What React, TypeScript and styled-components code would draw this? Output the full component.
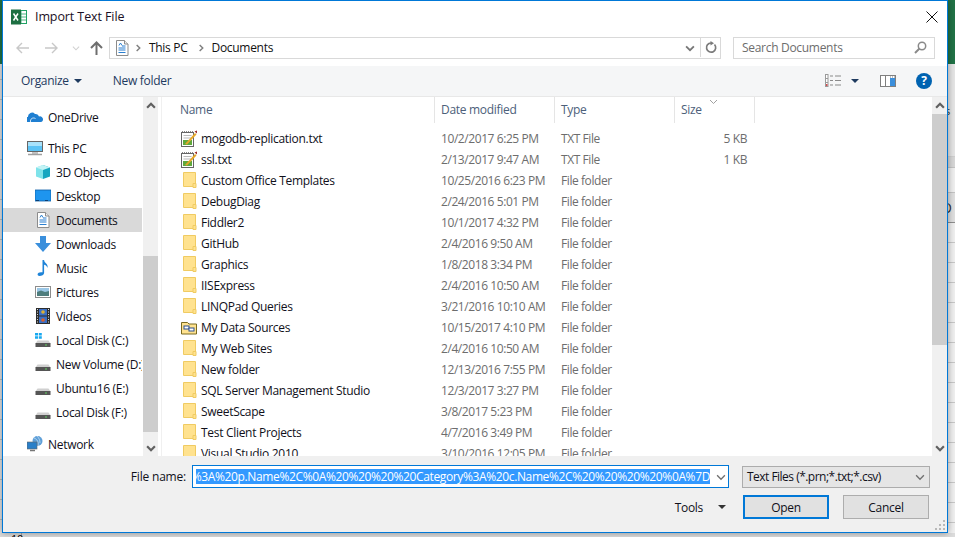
import React from "react";
import styled, { createGlobalStyle } from "styled-components";

const Global = createGlobalStyle`
  html, body { margin: 0; padding: 0; background: #e8e8e8; }
  * { box-sizing: border-box; }
`;

const FONT = `"Open Sans", "Noto Sans", "Liberation Sans", sans-serif`;

const Screen = styled.div`
  width: 955px; height: 537px; overflow: hidden; display: flex; flex-direction: column;
  font-family: ${FONT}; font-size: 12px; letter-spacing: -0.3px; color: #000;
`;
const TopRow = styled.div`display: flex; height: 533px;`;
const LeftSliver = styled.div`
  width: 2px; flex: none;
  background: linear-gradient(#217346 0 64px, transparent 64px), repeating-linear-gradient(#e2e2e2 0 19px, #bcbcbc 19px 20px);
`;
const Dialog = styled.div`
  width: 946px; flex: none; height: 533px; display: flex; flex-direction: column;
  border: 1px solid #0078d7; background: #fff; box-shadow: 0 0 7px rgba(0,0,0,.38); position: relative; z-index: 1;
`;
const RightStrip = styled.div`flex: 1; display: flex; flex-direction: column; background: #f0f0f0;`;
const Band = styled.div<{ $h: number; $bg: string; $line?: string }>`
  height: ${p => p.$h}px; flex: none; background: ${p => p.$bg}; border-bottom: 1px solid ${p => p.$line ?? "transparent"};
  overflow: hidden; display: flex; align-items: center; font-size: 11px; line-height: 1; color: #333;
`;
const ClippedGlyph = styled.span<{ $shift: number }>`margin-left: ${p => p.$shift}px; font-size: ${p => p.$shift < -6 ? 14 : 11}px; white-space: nowrap;`;
const BottomStrip = styled.div`
  height: 4px; flex: none; overflow: hidden; padding-left: 11px; font-size: 11px; line-height: 11px;
  background: linear-gradient(90deg, transparent 21px, #a8a8a8 21px 22px, transparent 22px), repeating-linear-gradient(90deg, #dcdcdc 0 84px, #a8a8a8 84px 85px, #dcdcdc 85px);
  background-size: 100% 100%, 64px 100%;
  background-position: 0 0, 21px 0;
`;

const TitleBar = styled.div`height: 31px; flex: none; display: flex; align-items: center; padding: 0 9px 0 8px; color: #000; font-size: 12.5px;`;
const TitleText = styled.span`margin-left: 8px; flex: 1; letter-spacing: -0.1px; color: #1a1026;`;

const Nav = styled.div`height: 34px; flex: none; display: flex; align-items: flex-start; padding: 5px 11px 0 0;`;
const NavButtons = styled.div`width: 106px; height: 22px; flex: none; display: flex; align-items: center; position: relative;`;
const NavSlot = styled.span<{ $w: number; $ml?: number }>`width: ${p => p.$w}px; margin-left: ${p => p.$ml ?? 0}px; display: flex; justify-content: center;`;
const Breadcrumb = styled.div`
  width: 612px; height: 22px; flex: none; display: flex; align-items: center; border: 1px solid #d9d9d9; background: #fff;
  padding: 0 0 1px 4px; color: #111;
`;
const CrumbSep = styled.span<{ $l: number; $r: number }>`margin: 0 ${p => p.$r}px 0 ${p => p.$l}px; display: flex;`;
const CrumbEnd = styled.div`margin-left: auto; height: 100%; display: flex;`;
const CrumbBtn = styled.span<{ $w: number; $line?: boolean }>`
  width: ${p => p.$w}px; display: flex; align-items: center; justify-content: center;
  border-left: ${p => p.$line ? "1px solid #d9d9d9" : "none"};
`;
const SearchBox = styled.div`
  width: 202px; height: 22px; margin-left: 12px; flex: none; display: flex; align-items: center; justify-content: space-between;
  border: 1px solid #d9d9d9; padding: 0 7px 1px 8px; color: #6d6d6d;
`;

const Toolbar = styled.div`
  height: 31px; flex: none; display: flex; align-items: center; background: #f5f6f7; border-bottom: 1px solid #e8e8e8;
  padding: 0 15px 1px 18px; color: #1e3a5f;
`;
const ToolLabel = styled.span<{ $ml?: number }>`margin-left: ${p => p.$ml ?? 0}px;`;
const ToolGroup = styled.div`margin-left: auto; display: flex; align-items: center;`;
const Caret = styled.span<{ $ml: number; $color?: string }>`
  margin-left: ${p => p.$ml}px; width: 0; height: 0; flex: none;
  border-left: 4px solid transparent; border-right: 4px solid transparent; border-top: 4px solid ${p => p.$color ?? "#1e3a5f"};
`;
const ToolGap = styled.span`width: 21px; flex: none;`;
const HelpBadge = styled.span`
  width: 16px; height: 16px; margin-left: 20px; border-radius: 50%; background: #0063b1; color: #fff; font-weight: 700; font-size: 12px;
  line-height: 16px; text-align: center; letter-spacing: 0;
`;

const Main = styled.div`height: 359px; flex: none; display: flex; background: #fff;`;
const Sidebar = styled.div`width: 140px; flex: none; overflow: hidden; padding-top: 8px;`;
const NavRow = styled.div<{ $sel?: boolean; $lvl: number; $gap?: number }>`
  height: 24px; width: 139px; display: flex; align-items: center; white-space: nowrap; overflow: hidden;
  margin-top: ${p => p.$gap ?? 0}px;
  padding-left: ${p => p.$lvl ? 32 : 24}px; background: ${p => p.$sel ? "#d9d9d9" : "transparent"}; color: #10101a;
`;
const NavIcon = styled.span`width: 16px; height: 16px; flex: none; margin-right: 5px; display: flex;`;
const ScrollBar = styled.div`width: 15px; flex: none; background: #f0f0f0; display: flex; flex-direction: column;`;
const ScrollBtn = styled.div`height: 17px; flex: none; display: flex; align-items: center; justify-content: center;`;
const Thumb = styled.div<{ $top: number; $h: number }>`
  margin-top: ${p => p.$top}px; height: ${p => p.$h}px; flex: none; background: #cdcdcd;
`;
const ScrollRest = styled.div`flex: 1;`;
const Splitter = styled.div`width: 4px; flex: none; border-right: 1px solid #f0f0f0;`;

const Files = styled.div`flex: 1; min-width: 0; overflow: hidden;`;
const Columns = "273px 120px 120px 80px";
const HeaderRow = styled.div`display: grid; grid-template-columns: ${Columns}; height: 25px; margin-bottom: 6px;`;
const HeadCell = styled.div<{ $pl: number }>`
  padding-left: ${p => p.$pl}px; border-right: 1px solid #e5e5e5; color: #4c607a; line-height: 26px; position: relative;
`;
const SortMark = styled.span`position: absolute; left: 34px; top: 0; display: flex;`;
const FileRow = styled.div`display: grid; grid-template-columns: ${Columns}; height: 21px; align-items: center; white-space: nowrap; color: #6d6d6d;`;
const NameCell = styled.div`display: flex; align-items: center; padding-left: 19px; color: #10101a;`;
const FileIcon = styled.span`width: 16px; height: 17px; flex: none; margin-right: 4px; display: flex;`;
const Cell = styled.div<{ $right?: boolean }>`
  padding: ${p => p.$right ? "0 8px 0 0" : "0 0 0 6px"}; text-align: ${p => p.$right ? "right" : "left"}; letter-spacing: -0.42px;
`;

const Footer = styled.div`flex: 1; background: #f0f0f0; padding-top: 9px; position: relative;`;
const FooterRow = styled.div`display: flex; align-items: center; height: 23px;`;
const FileLabel = styled.label`width: 183px; text-align: right; margin-right: 6px; flex: none; color: #10101a; letter-spacing: -0.2px;`;
const NameInput = styled.div`
  width: 537px; height: 23px; flex: none; display: flex; align-items: center; border: 1px solid #0078d7; background: #fff; padding-left: 3px;
`;
const SelectionClip = styled.div`width: 514px; flex: none; overflow: hidden; display: flex; justify-content: flex-end; background: #3399ff;`;
const SelectedText = styled.span`flex: none; color: #fff; line-height: 15px; white-space: nowrap; letter-spacing: -0.37px;`;
const InputChevron = styled.span`margin-left: 4px; width: 14px; display: flex; justify-content: center;`;
const FilterSelect = styled.div`
  width: 188px; height: 22px; margin-left: 13px; flex: none; display: flex; align-items: center; justify-content: space-between;
  border: 1px solid #acacac; background: #e5e5e5; padding: 0 4px 0 4px; color: #10101a; white-space: nowrap; letter-spacing: -0.52px;
`;
const ActionRow = styled.div`display: flex; align-items: center; justify-content: flex-end; height: 24px; margin-top: 7px; padding-right: 18px;`;
const ToolsLabel = styled.span`color: #10101a;`;
const ActionButton = styled.div<{ $primary?: boolean }>`
  width: 86px; height: 24px; flex: none; display: flex; align-items: center; justify-content: center; color: #10101a;
  background: #e1e1e1; border: ${p => p.$primary ? "2px solid #0078d7" : "1px solid #adadad"}; margin-left: ${p => p.$primary ? 17 : 14}px;
`;
const Grip = styled.span`position: absolute; right: 1px; bottom: 1px; display: flex;`;

const Chevron = ({ dir = "down", c = "#606060", size = 9, w = 1.6 }: { dir?: "down" | "up" | "right"; c?: string; size?: number; w?: number }) => {
  const d = dir === "down" ? "M1 3l3.5 3.5L8 3" : dir === "up" ? "M1 6l3.5-3.5L8 6" : "M3 1l3.5 3.5L3 8";
  return <svg width={size} height={size} viewBox="0 0 9 9"><path d={d} fill="none" stroke={c} strokeWidth={w} /></svg>;
};
const ArrowLeft = ({ c }: { c: string }) => (
  <svg width="13" height="12" viewBox="0 0 13 12"><path d="M1 6h12M6 1L1 6l5 5" fill="none" stroke={c} strokeWidth="1.4" /></svg>
);
const ArrowRight = ({ c }: { c: string }) => (
  <svg width="13" height="12" viewBox="0 0 13 12"><path d="M12 6H0M7 1l5 5-5 5" fill="none" stroke={c} strokeWidth="1.4" /></svg>
);
const ArrowUp = () => (
  <svg width="13" height="14" viewBox="0 0 13 14"><path d="M6.5 14V2M1 7l5.5-5.5L12 7" fill="none" stroke="#6e6e6e" strokeWidth="2" /></svg>
);
const ExcelIcon = () => (
  <svg width="16" height="16" viewBox="0 0 16 16">
    <rect x="5" y="1.5" width="10.5" height="13" fill="#fff" stroke="#21a366" />
    <path d="M10 1.5v13M5 5h10.500M5 8h10.500M5 11h10.500" stroke="#21a366" strokeWidth=".8" />
    <rect x="0" y="0.500" width="10" height="15" fill="#1d6f42" />
    <path d="M2.500 4.500l4.500 7M7 4.500l-4.500 7" stroke="#fff" strokeWidth="1.500" />
  </svg>
);
const DocIcon = () => (
  <svg width="16" height="16" viewBox="0 0 16 16">
    <path d="M2.500.5h8l3.500 3.500v11.500h-11.500z" fill="#fff" stroke="#8c8c8c" />
    <path d="M10.500.5v3.500h3.500" fill="#eee" stroke="#8c8c8c" />
    <path d="M5 5.500l1.500-2.500 1.500 2.500M4.500 8h7M8 6h3.500M4.500 10h7M4.500 12.500h7" stroke="#2a7fd0" strokeWidth="1" fill="none" />
  </svg>
);
const RefreshIcon = () => (
  <svg width="12" height="13" viewBox="0 0 12 13"><path d="M9.500 3.500a4.600 4.600 0 1 1-3.500-1.500" fill="none" stroke="#7a7a7a" strokeWidth="1.700" /><path d="M5.500 0v4.500L9 2.200z" fill="#7a7a7a" /></svg>
);
const SearchIcon = () => (
  <svg width="13" height="13" viewBox="0 0 13 13"><circle cx="8" cy="5" r="3.700" fill="none" stroke="#8a8a8a" strokeWidth="1.500" /><path d="M5.500 7.500L1 12" stroke="#8a8a8a" strokeWidth="2" /></svg>
);
const ViewIcon = () => (
  <svg width="17" height="13" viewBox="0 0 17 13">
    <rect x=".5" y=".5" width="2.500" height="12" fill="#fff" stroke="#9a9a9a" />
    <path d="M.5 4.500h2.500M.5 8.500h2.500" stroke="#9a9a9a" />
    <rect x="1" y="10" width="1.500" height="2" fill="#d05050" />
    <path d="M5 2h3M10 2h6M5 6.500h3M10 6.500h6M5 11h3M10 11h6" stroke="#8a8a8a" strokeWidth="1.200" />
  </svg>
);
const PaneIcon = () => (
  <svg width="16" height="12" viewBox="0 0 16 12">
    <rect x=".5" y=".5" width="15" height="11" fill="#fff" stroke="#7f7f7f" />
    <rect x="5" y="1" width="1" height="10" fill="#7f7f7f" />
    <rect x="10" y="3" width="5" height="8" fill="#3b8fdc" />
    <path d="M10 2h1M12 2h1M14 2h1" stroke="#7f7f7f" />
  </svg>
);
const OneDriveIcon = () => (
  <svg width="16" height="16" viewBox="0 0 16 16"><path d="M0 13a2.500 2.500 0 0 1 1-5 4 4 0 0 1 7-3 3.500 3.500 0 0 1 4 2.500 3 3 0 0 1 4 3c0 1.500-1 2.500-2 2.500z" fill="#1f7fd1" /><path d="M3.500 13c-.5-3 2-5 5-3.500" stroke="#fff" fill="none" strokeWidth=".8" /></svg>
);
const PCIcon = () => (
  <svg width="16" height="16" viewBox="0 0 16 16"><rect x=".5" y="1.500" width="15" height="10" fill="#5cc3f5" stroke="#666" /><rect x="1" y="2" width="14" height="4" fill="#a8e2fb" /><path d="M5 12.500h6v1H5z" fill="#888" /><path d="M1 14.500h14" stroke="#a0a0a0" strokeWidth="1.500" /></svg>
);
const CubeIcon = () => (
  <svg width="16" height="16" viewBox="0 0 16 16"><path d="M8 1l7 2.500v9L8 15z" fill="#16a6c0" /><path d="M8 1L1 3.500v9L8 15z" fill="#7fe3ea" /><path d="M1 3.500L8 6l7-2.500L8 1z" fill="#c3f3f5" /></svg>
);
const DesktopIcon = () => (
  <svg width="16" height="16" viewBox="0 0 16 16"><rect x="0" y="2" width="16" height="11" fill="#1e95ef" stroke="#0d5fa8" strokeWidth=".8" /><path d="M1 12.500h14" stroke="#0a3f74" strokeWidth="1" strokeDasharray="3 6" /></svg>
);
const DownloadIcon = () => (
  <svg width="16" height="16" viewBox="0 0 16 16"><path d="M5 0h6v7h5l-8 9-8-9h5z" fill="#3a8fdc" /></svg>
);
const MusicIcon = () => (
  <svg width="16" height="16" viewBox="0 0 16 16"><path d="M7.500 0h1.600c0 3 4.400 3.500 3.400 8-.5-2-2-3-3.400-3.200V13c0 2-2.500 3-4.600 3-2.500 0-2.500-3 0-3.500 1-.2 2-.2 3-.2z" fill="#1f84d8" /></svg>
);
const PicturesIcon = () => (
  <svg width="16" height="16" viewBox="0 0 16 16"><rect x=".5" y="2.500" width="15" height="11" fill="#fff" stroke="#8c8c8c" /><rect x="2" y="4" width="12" height="4" fill="#9bc7e6" /><path d="M2 8l4-1.500L10 8l4-1v5H2z" fill="#4e7d7d" /></svg>
);
const VideosIcon = () => (
  <svg width="16" height="16" viewBox="0 0 16 16"><rect x="1" y="0" width="14" height="16" fill="#2c2c2c" /><rect x="4" y="1" width="8" height="6.500" fill="#3b6fc4" /><rect x="4" y="8.500" width="8" height="6.500" fill="#3b6fc4" /><circle cx="8" cy="4" r="1.800" fill="#e0b030" /><circle cx="8" cy="12" r="1.800" fill="#d8602a" /><path d="M2.500 1v14M13.500 1v14" stroke="#ddd" strokeWidth="1" strokeDasharray="1 1.500" /></svg>
);
const DiskIcon = ({ win }: { win?: boolean }) => (
  <svg width="16" height="16" viewBox="0 0 16 16">
    <path d="M2.500 8.500h11l2 3H.5z" fill="#d0d0d0" />
    <rect x=".5" y="11" width="15" height="4" fill="#555" />
    <rect x="10" y="12.500" width="2" height="1" fill="#60d060" />
    {win && <path d="M0 1h3v2.500H0zM3.800 1h3v2.500h-3zM0 4.300h3v2.500H0zM3.800 4.300h3v2.500h-3z" fill="#19a9f0" />}
  </svg>
);
const NetworkIcon = () => (
  <svg width="16" height="16" viewBox="0 0 16 16"><circle cx="10.500" cy="5" r="5" fill="#5e9fd8" /><path d="M7 2c3 1 5 4 4 8M10 0c2 2 3 4 3 7" stroke="#cde4f5" fill="none" strokeWidth=".7" /><rect x="0" y="6" width="10" height="7" fill="#2a7fc8" stroke="#666" strokeWidth=".6" /><path d="M3 14.500h5" stroke="#777" strokeWidth="1.500" /></svg>
);
const TxtIcon = () => (
  <svg width="16" height="17" viewBox="0 0 16 17">
    <rect x=".5" y="2.500" width="12" height="14" fill="#fff" stroke="#666" />
    <path d="M1 1.800h11" stroke="#666" strokeWidth="1.200" strokeDasharray="1 1" />
    <path d="M2.500 5.500h8M2.500 8h8" stroke="#bbb" />
    <rect x="2" y="10" width="9" height="5" fill="#5fa83c" />
    <path d="M4 14L14 3l1.500 1.500L6 14.500z" fill="#e7a82a" />
    <path d="M13.500 1.500l2.500-1v3z" fill="#9c2b2b" />
  </svg>
);
const FolderIcon = () => (
  <svg width="16" height="17" viewBox="0 0 16 17">
    <path d="M2.500.5h12v14h-12z" fill="#ffe28f" stroke="#f0cb62" />
    <path d="M12 15.500v-4h3v4z" fill="#ffe28f" stroke="#f0cb62" />
  </svg>
);
const DataFolderIcon = () => (
  <svg width="16" height="17" viewBox="0 0 16 17">
    <path d="M.5 3.500h6l1.500 1.500h7.500v10H.5z" fill="#ffe28f" stroke="#7a6a20" />
    <rect x="3" y="7" width="5" height="3" fill="#fff" stroke="#2a4f90" />
    <rect x="8" y="9" width="5" height="3" fill="#fff" stroke="#2a4f90" />
  </svg>
);
const GripIcon = () => (
  <svg width="11" height="11" viewBox="0 0 11 11"><path d="M8 0h2v2H8zM4 4h2v2H4zM8 4h2v2H8zM0 8h2v2H0zM4 8h2v2H4zM8 8h2v2H8z" fill="#b8b8b8" /></svg>
);

const navTop = [
  { label: "3D Objects", icon: <CubeIcon /> },
  { label: "Desktop", icon: <DesktopIcon /> },
  { label: "Documents", icon: <DocIcon />, sel: true },
  { label: "Downloads", icon: <DownloadIcon /> },
  { label: "Music", icon: <MusicIcon /> },
  { label: "Pictures", icon: <PicturesIcon /> },
  { label: "Videos", icon: <VideosIcon /> },
  { label: "Local Disk (C:)", icon: <DiskIcon win /> },
  { label: "New Volume (D:)", icon: <DiskIcon /> },
  { label: "Ubuntu16 (E:)", icon: <DiskIcon /> },
  { label: "Local Disk (F:)", icon: <DiskIcon /> },
];

type F = { name: string; date: string; kind?: "txt" | "data"; size?: string };
const files: F[] = [
  { name: "mogodb-replication.txt", date: "10/2/2017 6:25 PM", kind: "txt", size: "5 KB" },
  { name: "ssl.txt", date: "2/13/2017 9:47 AM", kind: "txt", size: "1 KB" },
  { name: "Custom Office Templates", date: "10/25/2016 6:23 PM" },
  { name: "DebugDiag", date: "2/24/2016 5:01 PM" },
  { name: "Fiddler2", date: "10/1/2017 4:32 PM" },
  { name: "GitHub", date: "2/4/2016 9:50 AM" },
  { name: "Graphics", date: "1/8/2018 3:34 PM" },
  { name: "IISExpress", date: "2/4/2016 10:50 AM" },
  { name: "LINQPad Queries", date: "3/21/2016 10:10 AM" },
  { name: "My Data Sources", date: "10/15/2017 4:10 PM", kind: "data" },
  { name: "My Web Sites", date: "2/4/2016 10:50 AM" },
  { name: "New folder", date: "12/13/2016 7:55 PM" },
  { name: "SQL Server Management Studio", date: "12/3/2017 3:27 PM" },
  { name: "SweetScape", date: "3/8/2017 5:23 PM" },
  { name: "Test Client Projects", date: "4/7/2016 3:49 PM" },
  { name: "Visual Studio 2010", date: "3/10/2016 12:05 PM" },
];

export default function App() {
  return (
    <Screen>
      <Global />
      <TopRow>
        <LeftSliver />
        <Dialog>
          <TitleBar>
            <ExcelIcon />
            <TitleText>Import Text File</TitleText>
            <svg width="12" height="12" viewBox="0 0 12 12"><path d="M.5.5l11 11M11.500.5l-11 11" stroke="#111" strokeWidth="1" /></svg>
          </TitleBar>
          <Nav>
            <NavButtons>
              <NavSlot $w={13} $ml={13}><ArrowLeft c="#c8c8c8" /></NavSlot>
              <NavSlot $w={13} $ml={16}><ArrowRight c="#c8c8c8" /></NavSlot>
              <NavSlot $w={9} $ml={13}><Chevron c="#d0d0d0" size={8} w={1.2} /></NavSlot>
              <NavSlot $w={13} $ml={10}><ArrowUp /></NavSlot>
            </NavButtons>
            <Breadcrumb>
              <DocIcon />
              <CrumbSep $l={4} $r={7}><Chevron dir="right" size={8} c="#7f7f7f" /></CrumbSep>
              This PC
              <CrumbSep $l={9} $r={7}><Chevron dir="right" size={8} c="#7f7f7f" /></CrumbSep>
              Documents
              <CrumbEnd>
                <CrumbBtn $w={20}><Chevron c="#777" size={10} /></CrumbBtn>
                <CrumbBtn $w={20} $line><RefreshIcon /></CrumbBtn>
              </CrumbEnd>
            </Breadcrumb>
            <SearchBox>
              Search Documents
              <SearchIcon />
            </SearchBox>
          </Nav>
          <Toolbar>
            <ToolLabel>Organize</ToolLabel>
            <Caret $ml={5} />
            <ToolLabel $ml={31}>New folder</ToolLabel>
            <ToolGroup>
              <ViewIcon />
              <Caret $ml={9} />
              <ToolGap />
              <PaneIcon />
              <HelpBadge>?</HelpBadge>
            </ToolGroup>
          </Toolbar>
          <Main>
            <Sidebar>
              <NavRow $lvl={0}><NavIcon><OneDriveIcon /></NavIcon>OneDrive</NavRow>
              <NavRow $lvl={0} $gap={7}><NavIcon><PCIcon /></NavIcon>This PC</NavRow>
              {navTop.map(n => (
                <NavRow key={n.label} $lvl={1} $sel={n.sel}><NavIcon>{n.icon}</NavIcon>{n.label}</NavRow>
              ))}
              <NavRow $lvl={0} $gap={8}><NavIcon><NetworkIcon /></NavIcon>Network</NavRow>
            </Sidebar>
            <ScrollBar>
              <ScrollBtn><Chevron dir="up" size={10} w={2} /></ScrollBtn>
              <Thumb $top={142} $h={176} />
              <ScrollRest />
              <ScrollBtn><Chevron size={10} w={2} /></ScrollBtn>
            </ScrollBar>
            <Splitter />
            <Files>
              <HeaderRow>
                <HeadCell $pl={18}>Name</HeadCell>
                <HeadCell $pl={6}>Date modified</HeadCell>
                <HeadCell $pl={6}>Type</HeadCell>
                <HeadCell $pl={6}>Size<SortMark><Chevron size={9} c="#a0a0a0" w={1} /></SortMark></HeadCell>
              </HeaderRow>
              {files.map(f => (
                <FileRow key={f.name}>
                  <NameCell>
                    <FileIcon>{f.kind === "txt" ? <TxtIcon /> : f.kind === "data" ? <DataFolderIcon /> : <FolderIcon />}</FileIcon>
                    {f.name}
                  </NameCell>
                  <Cell>{f.date}</Cell>
                  <Cell>{f.kind === "txt" ? "TXT File" : "File folder"}</Cell>
                  <Cell $right>{f.size}</Cell>
                </FileRow>
              ))}
            </Files>
            <ScrollBar>
              <ScrollBtn><Chevron dir="up" size={10} w={2} /></ScrollBtn>
              <Thumb $top={0} $h={231} />
              <ScrollRest />
              <ScrollBtn><Chevron size={10} w={2} /></ScrollBtn>
            </ScrollBar>
          </Main>
          <Footer>
            <FooterRow>
              <FileLabel>File name:</FileLabel>
              <NameInput>
                <SelectionClip>
                  <SelectedText>%3A%20p.Name%2C%0A%20%20%20%20Category%3A%20c.Name%2C%20%20%20%20%0A%7D</SelectedText>
                </SelectionClip>
                <InputChevron><Chevron size={10} c="#707070" w={1.2} /></InputChevron>
              </NameInput>
              <FilterSelect>
                Text Files (*.prn;*.txt;*.csv)
                <Chevron size={10} c="#707070" w={1.2} />
              </FilterSelect>
            </FooterRow>
            <ActionRow>
              <ToolsLabel>Tools</ToolsLabel>
              <Caret $ml={15} $color="#333" />
              <ActionButton $primary>Open</ActionButton>
              <ActionButton>Cancel</ActionButton>
            </ActionRow>
            <Grip><GripIcon /></Grip>
          </Footer>
        </Dialog>
        <RightStrip>
          <Band $h={64} $bg="#217346" />
          <Band $h={93} $bg="#e6e6e6" $line="#d0d0d0"><ClippedGlyph $shift={-3}>s</ClippedGlyph></Band>
          <Band $h={11} $bg="#d8d8d8" $line="#c4c4c4" />
          <Band $h={25} $bg="#f0f0f0" $line="#c4c4c4" />
          <Band $h={30} $bg="#e0e0e0" $line="#8f8f8f"><ClippedGlyph $shift={-7}>O</ClippedGlyph></Band>
          {Array.from({ length: 16 }, (_, i) => <Band key={i} $h={20} $bg="#f0f0f0" $line="#c8c8c8" />)}
        </RightStrip>
      </TopRow>
      <BottomStrip>10</BottomStrip>
    </Screen>
  );
}
